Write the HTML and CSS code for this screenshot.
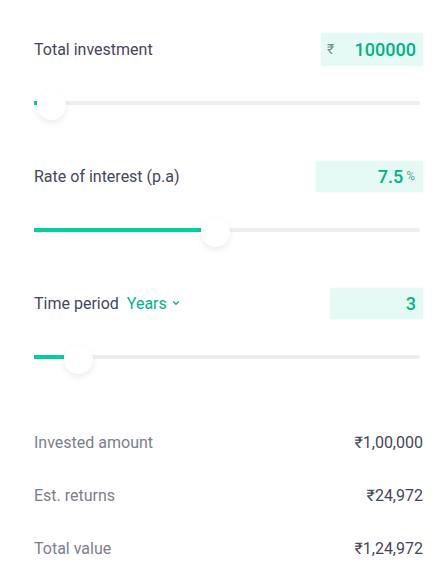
FILE: index.html
```html
<!DOCTYPE html>
<html lang="en">

<head>
    <meta charset="UTF-8">
    <meta name="viewport" content="width=device-width, initial-scale=1.0">
    <title>Lumpsum Calculator</title>
    <link rel="stylesheet" href="styles.css">
</head>

<body>
    <div class="calc">
        <!-- Inputs -->
        <div class="field">
            <div class="field-row">
                <span class="field-label">Total investment</span>
                <div class="value-box box-amount">
                    <span class="unit-pre">₹</span>
                    <span class="value">100000</span>
                </div>
            </div>
            <div class="slider">
                <div class="track">
                    <div class="fill" style="width: 3px;"></div>
                    <div class="thumb"></div>
                </div>
            </div>
        </div>

        <div class="field">
            <div class="field-row">
                <span class="field-label">Rate of interest (p.a)</span>
                <div class="value-box box-rate">
                    <span class="value">7.5</span>
                    <span class="unit-post">%</span>
                </div>
            </div>
            <div class="slider">
                <div class="track">
                    <div class="fill" style="width: 167px;"></div>
                    <div class="thumb"></div>
                </div>
            </div>
        </div>

        <div class="field">
            <div class="field-row">
                <span class="field-label">Time period
                    <span class="period-select">Years
                        <svg width="8" height="6" viewBox="0 0 8 6"><path d="M1.5 1.8 L4 4.2 L6.5 1.8" fill="none" stroke="#00b386" stroke-width="1.3" stroke-linecap="round" stroke-linejoin="round"/></svg>
                    </span>
                </span>
                <div class="value-box box-time">
                    <span class="value">3</span>
                </div>
            </div>
            <div class="slider">
                <div class="track">
                    <div class="fill" style="width: 30px;"></div>
                    <div class="thumb"></div>
                </div>
            </div>
        </div>

        <!-- Results -->
        <div class="results">
            <div class="result-row">
                <span class="result-label">Invested amount</span>
                <span class="result-value">₹1,00,000</span>
            </div>
            <div class="result-row">
                <span class="result-label">Est. returns</span>
                <span class="result-value">₹24,972</span>
            </div>
            <div class="result-row">
                <span class="result-label">Total value</span>
                <span class="result-value">₹1,24,972</span>
            </div>
        </div>
    </div>
</body>

</html>
```

FILE: styles.css
```css
/* General body and container styling */
body {
    font-family: Roboto, "Liberation Sans", sans-serif;
    background-color: #fff;
    margin: 0;
    padding: 0;
    color: #44475b;
}

.calc {
    padding: 32px 21px 0 34px;
}

/* Input fields */
.field {
    margin-bottom: 42px;
}

.field-row {
    display: flex;
    align-items: center;
    justify-content: space-between;
    height: 34px;
}

.field-label {
    font-size: 16px;
    color: #44475b;
}

.period-select {
    margin-left: 4px;
    color: #00b386;
}

.period-select svg {
    margin-left: 1px;
    vertical-align: 3px;
}

.value-box {
    display: flex;
    align-items: center;
    justify-content: flex-end;
    height: 31px;
    padding: 0 7px;
    background-color: #e6faf5;
    box-shadow: 0 0 3px #e6faf5;
    border-radius: 2px;
    box-sizing: border-box;
}

.box-amount {
    width: 102px;
    height: 33px;
    justify-content: space-between;
    padding-left: 6px;
}

.box-rate {
    width: 107px;
    padding-right: 8px;
}

.box-time {
    width: 93px;
}

.value {
    font-size: 18px;
    font-weight: 500;
    color: #00b386;
}

.unit-pre {
    font-size: 14px;
    color: #6f9388;
}

.unit-post {
    font-size: 12px;
    margin-left: 3px;
    color: #5aa993;
}

/* Sliders */
.slider {
    margin-top: 23px;
    height: 28px;
    display: flex;
    align-items: center;
    padding-right: 3px;
}

.track {
    position: relative;
    display: flex;
    align-items: center;
    width: 100%;
    height: 4px;
    background-color: #eeeeef;
    border-radius: 2px;
}

.fill {
    height: 4px;
    background-color: #00d09c;
}

.thumb {
    position: relative;
    flex-shrink: 0;
    width: 29px;
    height: 29px;
    margin-top: 4px;
    border-radius: 50%;
    background-color: #fff;
    box-shadow: 0 3px 6px rgba(0, 0, 0, 0.08);
}

/* Results */
.results {
    margin-top: 59px;
}

.result-row {
    display: flex;
    justify-content: space-between;
    align-items: center;
    height: 24px;
    margin-bottom: 29px;
    font-size: 16px;
}

.result-label {
    color: #7c7e8c;
}

.result-value {
    color: #44475b;
}
```
